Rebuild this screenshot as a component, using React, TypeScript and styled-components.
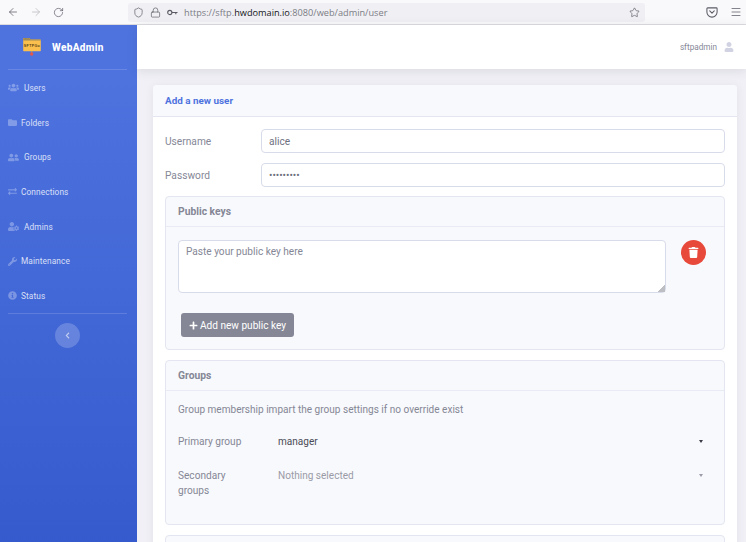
import React from 'react';
import styled, { createGlobalStyle } from 'styled-components';
import { ArrowLeft, ArrowRight, RotateCw, Shield, Lock, Star, Menu } from 'lucide-react';
import {
  FaUsers,
  FaFolder,
  FaUserFriends,
  FaExchangeAlt,
  FaUserCog,
  FaWrench,
  FaInfoCircle,
  FaChevronLeft,
  FaPlus,
  FaTrash,
  FaUser,
} from 'react-icons/fa';

const GlobalStyle = createGlobalStyle`
  html, body {
    margin: 0;
    padding: 0;
    height: 100%;
    overflow: hidden;
  }
  * {
    box-sizing: border-box;
  }
  body {
    font-family: Roboto, "Liberation Sans", sans-serif;
  }
`;

const Page = styled.div`
  width: 746px;
  height: 542px;
  display: flex;
  flex-direction: column;
  overflow: hidden;
`;

const BrowserBar = styled.div`
  height: 25px;
  flex: none;
  display: flex;
  align-items: center;
  background: #f9f9fb;
  border-bottom: 1px solid #dcdce0;
  color: #5b5b66;
  padding-left: 7px;
`;

const NavIcons = styled.div`
  width: 121px;
  display: flex;
  align-items: center;
  gap: 11px;
`;

const FadedIcon = styled.span`
  display: flex;
  color: #b8b8bf;
`;

const UrlBar = styled.div`
  width: 517px;
  height: 19px;
  border-radius: 3px;
  background: #f0f0f4;
  display: flex;
  align-items: center;
  padding: 0 5px;
  gap: 6px;
`;

const UrlText = styled.div`
  flex: 1;
  font-family: "Open Sans", sans-serif;
  font-size: 9.2px;
  color: #7c7c85;
  white-space: nowrap;
  b {
    font-weight: 500;
    color: #15141a;
  }
`;

const BarEnd = styled.div`
  flex: 1;
  display: flex;
  justify-content: flex-end;
  align-items: center;
  gap: 12px;
  padding-right: 4px;
`;

const Shell = styled.div`
  flex: 1;
  display: flex;
  min-height: 0;
`;

const Sidebar = styled.div`
  width: 137px;
  flex: none;
  background: linear-gradient(180deg, #4e73df 10%, #2f55c9 120%);
  padding: 0 10px 0 8px;
  display: flex;
  flex-direction: column;
`;

const Brand = styled.div`
  height: 45px;
  flex: none;
  display: flex;
  align-items: center;
  gap: 11px;
  padding-left: 15px;
  color: #fff;
  font-size: 10px;
  font-weight: 800;
  letter-spacing: 0.35px;
  border-bottom: 1px solid rgba(255, 255, 255, 0.15);
`;

const NavItem = styled.div<{ $narrow?: boolean }>`
  height: 34.7px;
  flex: none;
  display: flex;
  align-items: center;
  gap: ${(p) => (p.$narrow ? '4px' : '5px')};
  font-size: 8.3px;
  color: rgba(255, 255, 255, 0.8);
  letter-spacing: 0.1px;
  svg {
    color: rgba(255, 255, 255, 0.3);
    flex: none;
  }
`;

const SideList = styled.div`
  padding-top: 0.5px;
  border-bottom: 1px solid rgba(255, 255, 255, 0.15);
`;

const ToggleButton = styled.div`
  width: 25px;
  height: 25px;
  margin: 9px auto 0;
  border-radius: 50%;
  background: rgba(255, 255, 255, 0.2);
  color: rgba(255, 255, 255, 0.6);
  display: flex;
  align-items: center;
  justify-content: center;
`;

const Main = styled.div`
  flex: 1;
  min-width: 0;
  background: #f0f0f6;
  display: flex;
  flex-direction: column;
`;

const Topbar = styled.div`
  height: 44px;
  flex: none;
  background: #fff;
  box-shadow: 0 2px 10px rgba(58, 59, 69, 0.12);
  display: flex;
  align-items: center;
  justify-content: flex-end;
  gap: 7px;
  padding-right: 12px;
  font-size: 8.2px;
  color: #858796;
`;

const Content = styled.div`
  padding: 16px 9px 0 16px;
`;

const Card = styled.div`
  background: #fff;
  border-radius: 4px;
  box-shadow: 0 1px 8px rgba(58, 59, 69, 0.08);
`;

const CardHeader = styled.div`
  height: 32px;
  display: flex;
  align-items: center;
  padding: 0 12px;
  background: #f8f9fc;
  border-bottom: 1px solid #e3e6f0;
  border-radius: 4px 4px 0 0;
  font-size: 9.9px;
  font-weight: 700;
  color: #4e73df;
`;

const CardBody = styled.div`
  padding: 12px 12px 0;
`;

const FormRow = styled.div`
  display: flex;
  align-items: center;
  height: 24px;
  margin-bottom: 10px;
  &:nth-child(2) {
    margin-bottom: 9px;
  }
`;

const Label = styled.div`
  width: 96px;
  flex: none;
  font-size: 10.2px;
  color: #858796;
`;

const Input = styled.input`
  flex: 1;
  min-width: 0;
  height: 24px;
  border: 1px solid #d8dbea;
  border-radius: 4px;
  background: #fff;
  padding: 0 7px;
  font-family: inherit;
  font-size: 10.1px;
  color: #6e707e;
  outline: none;
`;

const Panel = styled.div`
  background: #f8f9fc;
  border: 1px solid #e3e6f0;
  border-radius: 4px;
  margin-bottom: 10px;
`;

const PanelHeader = styled.div`
  height: 30px;
  display: flex;
  align-items: center;
  padding: 0 12px;
  border-bottom: 1px solid #e9ebf4;
  font-size: 10.3px;
  font-weight: 700;
  color: #858796;
`;

const KeysBody = styled.div`
  padding: 13px 12px 12px;
`;

const KeyRow = styled.div`
  display: flex;
  align-items: flex-start;
  gap: 15px;
`;

const KeyArea = styled.textarea`
  width: 488px;
  height: 53px;
  display: block;
  border: 1px solid #d8dbea;
  border-radius: 4px;
  background: #fff;
  padding: 5px 7px;
  font-family: inherit;
  font-size: 10.1px;
  color: #6e707e;
  outline: none;
  &::placeholder {
    color: #858796;
  }
  &::-webkit-resizer {
    background: linear-gradient(135deg, transparent 76%, #bdbdc4 76%);
  }
`;

const DeleteButton = styled.button`
  width: 25px;
  height: 25px;
  border: none;
  padding: 0;
  border-radius: 50%;
  background: #e74a3b;
  color: #fff;
  display: flex;
  align-items: center;
  justify-content: center;
`;

const AddButton = styled.button`
  margin: 20px 0 0 3px;
  width: 113px;
  height: 24px;
  border: none;
  border-radius: 3px;
  background: #858796;
  color: #fff;
  font-family: inherit;
  font-size: 10.1px;
  display: flex;
  align-items: center;
  justify-content: center;
  gap: 2px;
  padding: 0;
`;

const GroupsBody = styled.div`
  height: 133px;
  padding: 11px 12px 0;
`;

const Hint = styled.div`
  font-size: 10.05px;
  line-height: 15px;
  color: #858796;
  margin-bottom: 16.5px;
`;

const GroupRow = styled.div`
  display: flex;
  align-items: flex-start;
  margin-bottom: 19px;
  line-height: 15px;
`;

const GroupLabel = styled.div`
  width: 100px;
  flex: none;
  font-size: 10.1px;
  color: #858796;
`;

const SelectValue = styled.div<{ $muted?: boolean }>`
  flex: 1;
  display: flex;
  align-items: center;
  justify-content: space-between;
  font-size: 10.05px;
  color: ${(p) => (p.$muted ? '#9a9ba7' : '#4a4b57')};
  padding-right: 9px;
`;

const Caret = styled.span<{ $muted?: boolean }>`
  width: 0;
  height: 0;
  border-left: 2.5px solid transparent;
  border-right: 2.5px solid transparent;
  border-top: 3px solid ${(p) => (p.$muted ? '#9a9ba7' : '#3a3b45')};
`;

const Logo = () => (
  <svg width="18" height="18" viewBox="0 0 18 18">
    <path d="M.8 0h5.6l1.4 1.4h9.4a.6.6 0 0 1 .6.6v10.6a.6.6 0 0 1-.6.6H.8a.6.6 0 0 1-.6-.6V.6A.6.6 0 0 1 .8 0z" fill="#fbbf4d" />
    <path d="M.2 2.4V.6A.6.6 0 0 1 .8 0h5.6l1.4 1.4h9.4a.6.6 0 0 1 .6.6v.4z" fill="#a08a55" />
    <text x="9" y="8.6" textAnchor="middle" fontFamily="Liberation Sans, sans-serif" fontSize="3.6" fontWeight="700" fill="#5a4212">
      SFTPGo
    </text>
    <rect x="8.2" y="13.2" width="1" height="2" fill="#c9a24a" />
    <circle cx="8.7" cy="16" r="1.7" fill="#e2574c" />
  </svg>
);

const KeyIcon = () => (
  <svg width="11" height="11" viewBox="0 0 11 11" fill="none" stroke="currentColor" strokeWidth="1.1">
    <circle cx="2.8" cy="5.5" r="2.1" />
    <path d="M4.9 5.5h5.6M8.8 5.5v1.8" />
  </svg>
);

const PocketIcon = () => (
  <svg width="12" height="12" viewBox="0 0 16 16" fill="none" stroke="currentColor" strokeWidth="1.4">
    <path d="M2.2 2.5h11.6a1 1 0 0 1 1 1V8a6.8 6.8 0 0 1-13.6 0V3.5a1 1 0 0 1 1-1z" />
    <path d="M5 6.5l3 3 3-3" strokeLinecap="round" strokeLinejoin="round" />
  </svg>
);

const navItems = [
  { label: 'Users', icon: <FaUsers size={11} /> },
  { label: 'Folders', icon: <FaFolder size={9} />, narrow: true },
  { label: 'Groups', icon: <FaUserFriends size={11} /> },
  { label: 'Connections', icon: <FaExchangeAlt size={9} />, narrow: true },
  { label: 'Admins', icon: <FaUserCog size={11} /> },
  { label: 'Maintenance', icon: <FaWrench size={9} />, narrow: true },
  { label: 'Status', icon: <FaInfoCircle size={9} />, narrow: true },
];

export default function App() {
  return (
    <>
      <GlobalStyle />
      <Page>
        <BrowserBar>
          <NavIcons>
            <ArrowLeft size={12} strokeWidth={1.5} />
            <FadedIcon>
              <ArrowRight size={12} strokeWidth={1.5} />
            </FadedIcon>
            <RotateCw size={11} strokeWidth={1.5} />
          </NavIcons>
          <UrlBar>
            <Shield size={11} strokeWidth={1.5} />
            <Lock size={11} strokeWidth={1.5} />
            <KeyIcon />
            <UrlText>
              https://sftp.<b>hwdomain.io</b>:8080/web/admin/user
            </UrlText>
            <Star size={11} strokeWidth={1.5} />
          </UrlBar>
          <BarEnd>
            <PocketIcon />
            <Menu size={12} strokeWidth={1.5} />
          </BarEnd>
        </BrowserBar>
        <Shell>
          <Sidebar>
            <Brand>
              <Logo />
              WebAdmin
            </Brand>
            <SideList>
              {navItems.map((item) => (
                <NavItem key={item.label} $narrow={item.narrow}>
                  {item.icon}
                  {item.label}
                </NavItem>
              ))}
            </SideList>
            <ToggleButton>
              <FaChevronLeft size={7} />
            </ToggleButton>
          </Sidebar>
          <Main>
            <Topbar>
              sftpadmin
              <FaUser size={10} color="#d1d3e2" />
            </Topbar>
            <Content>
              <Card>
                <CardHeader>Add a new user</CardHeader>
                <CardBody>
                  <FormRow>
                    <Label>Username</Label>
                    <Input defaultValue="alice" />
                  </FormRow>
                  <FormRow>
                    <Label>Password</Label>
                    <Input type="password" defaultValue="123456789" />
                  </FormRow>
                  <Panel>
                    <PanelHeader>Public keys</PanelHeader>
                    <KeysBody>
                      <KeyRow>
                        <KeyArea placeholder="Paste your public key here" />
                        <DeleteButton>
                          <FaTrash size={11} />
                        </DeleteButton>
                      </KeyRow>
                      <AddButton>
                        <FaPlus size={9} />
                        Add new public key
                      </AddButton>
                    </KeysBody>
                  </Panel>
                  <Panel>
                    <PanelHeader>Groups</PanelHeader>
                    <GroupsBody>
                      <Hint>Group membership impart the group settings if no override exist</Hint>
                      <GroupRow>
                        <GroupLabel>Primary group</GroupLabel>
                        <SelectValue>
                          manager
                          <Caret />
                        </SelectValue>
                      </GroupRow>
                      <GroupRow>
                        <GroupLabel>
                          Secondary
                          <br />
                          groups
                        </GroupLabel>
                        <SelectValue $muted>
                          Nothing selected
                          <Caret $muted />
                        </SelectValue>
                      </GroupRow>
                    </GroupsBody>
                  </Panel>
                  <Panel>
                    <PanelHeader />
                  </Panel>
                </CardBody>
              </Card>
            </Content>
          </Main>
        </Shell>
      </Page>
    </>
  );
}
